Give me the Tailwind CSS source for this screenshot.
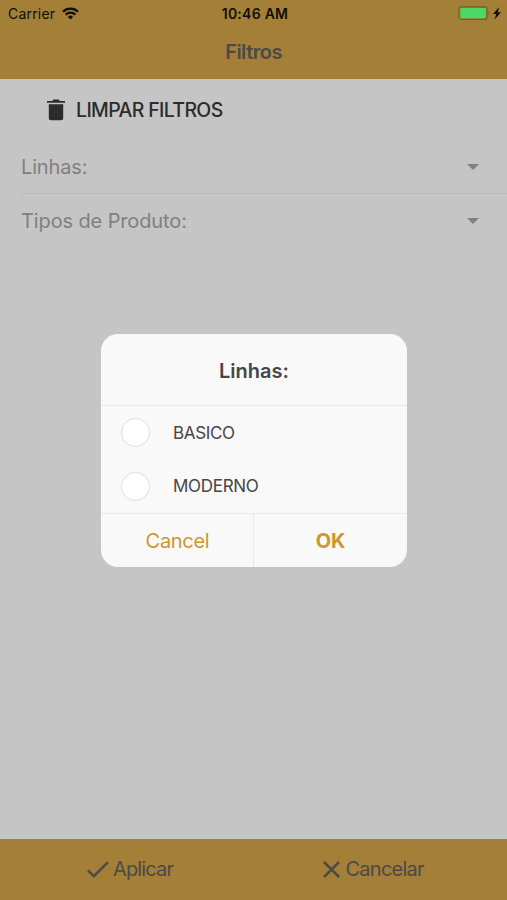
<!DOCTYPE html>
<html lang="pt">
<head>
<meta charset="utf-8">
<title>Filtros</title>
<script src="https://cdn.jsdelivr.net/npm/@tailwindcss/browser@4"></script>
</head>
<body class="relative flex h-[900px] w-[507px] flex-col overflow-hidden bg-[#c5c5c5] font-['Inter',sans-serif] text-[#4b4a48]">
  <header class="h-[79px] shrink-0 bg-[#a37f38]">
    <div class="grid h-[27px] grid-cols-3 items-center pl-2 pr-[5px] text-[14px] text-[#120e06]">
      <div class="flex items-center gap-[7px]">
        <span class="tracking-[0.2px]">Carrier</span>
        <svg width="17" height="13" viewBox="0 0 17 13" fill="none" stroke="currentColor" stroke-width="2.3"><path d="M1 4.8a10.6 10.6 0 0 1 15 0M3.7 7.6a6.8 6.8 0 0 1 9.6 0"/><path d="M8.5 12.5 5.9 9.9a3.7 3.7 0 0 1 5.2 0Z" fill="currentColor" stroke="none"/></svg>
      </div>
      <span class="whitespace-nowrap text-center text-[14px] font-semibold tracking-[0.25px]">10:46 AM</span>
      <div class="flex items-center justify-end">
        <svg width="44" height="15" viewBox="0 0 44 15"><rect x="1" y=".8" width="28" height="12.6" rx="2.5" fill="none" stroke="#77601f" stroke-width="1.2"/><rect x="2.2" y="2" width="25.6" height="10.2" rx="1.5" fill="#4cd865"/><path d="M30.4 5.2q2 1.9 0 4z" fill="#77601f"/><path d="M41.2 1 35 8h3.2l-1.6 5.5L43 6.2h-3.2z" fill="#120e06"/></svg>
      </div>
    </div>
    <h1 class="pt-[10px] text-center text-[20px] leading-[30px] font-semibold tracking-[-0.5px]">Filtros</h1>
  </header>

  <main class="flex-1">
    <div class="flex h-[62px] items-center gap-[11px] pl-[47px] text-[#2c2c2c]">
      <svg width="18" height="22" viewBox="0 0 18 22" fill="currentColor"><path d="M0 2h5l1.5-1.5h5L13 2h5v1.7H0zM1.8 5.3h14.4v14q0 2-2 2H3.8q-2 0-2-2z"/></svg>
      <span class="pt-0.5 text-[19.5px] font-medium tracking-[-0.65px]">LIMPAR FILTROS</span>
    </div>
    <div class="ml-[21px] flex h-[53px] items-center justify-between border-b border-[#b9b9b9] pr-7 text-[#808080]">
      <span class="text-[20px] tracking-[-0.15px]">Linhas:</span>
      <svg width="12" height="6" viewBox="0 0 12 6" fill="currentColor"><path d="M0 0h12L6 6z"/></svg>
    </div>
    <div class="ml-[21px] flex h-[53px] items-center justify-between border-b border-[#c2c2c2] pr-7 pt-px text-[#808080]">
      <span class="text-[20px] tracking-[-0.12px]">Tipos de Produto:</span>
      <svg width="12" height="6" viewBox="0 0 12 6" fill="currentColor"><path d="M0 0h12L6 6z"/></svg>
    </div>
  </main>

  <footer class="grid h-[61px] shrink-0 grid-cols-2 bg-[#a37f38] text-[20px]">
    <div class="flex items-center gap-1 pl-[87px]">
      <svg width="22" height="17" viewBox="0 0 22 17" fill="none" stroke="currentColor" stroke-width="2.5"><path d="M1 9.4 6.8 15.2 21 1.2"/></svg>
      <span class="pb-px tracking-[-0.85px]">Aplicar</span>
    </div>
    <div class="flex items-center gap-[6px] pl-[69px]">
      <svg width="17" height="17" viewBox="0 0 17 17" fill="none" stroke="currentColor" stroke-width="2.5"><path d="m1 1 15 15M16 1 1 16"/></svg>
      <span class="pb-px tracking-[-0.75px]">Cancelar</span>
    </div>
  </footer>

  <div class="absolute inset-0 flex items-center justify-center pl-px pt-px">
    <section class="flex h-[233px] w-[306px] flex-col overflow-hidden rounded-[17px] bg-[#f9f9f9] text-[#464646]">
      <h2 class="flex h-[72px] items-center justify-center border-b border-[#e9e9e9] pt-[2px] text-[20px] font-semibold">Linhas:</h2>
      <div class="flex h-[108px] flex-col border-b border-[#e9e9e9] pl-5 text-[17px]">
        <label class="flex h-[54px] items-center gap-[23px]"><span class="size-[29px] rounded-full border border-[#dedede] bg-white"></span><span class="pt-px tracking-[-0.35px]">BASICO</span></label>
        <label class="flex h-[54px] items-center gap-[23px]"><span class="size-[29px] rounded-full border border-[#dedede] bg-white"></span><span class="pt-px tracking-[-0.3px]">MODERNO</span></label>
      </div>
      <div class="grid flex-1 grid-cols-2 text-[20px] text-[#cd972c]">
        <button class="border-r border-[#e9e9e9] pl-px tracking-[-0.3px]">Cancel</button>
        <button class="font-bold tracking-[-0.1px]">OK</button>
      </div>
    </section>
  </div>
</body>
</html>
